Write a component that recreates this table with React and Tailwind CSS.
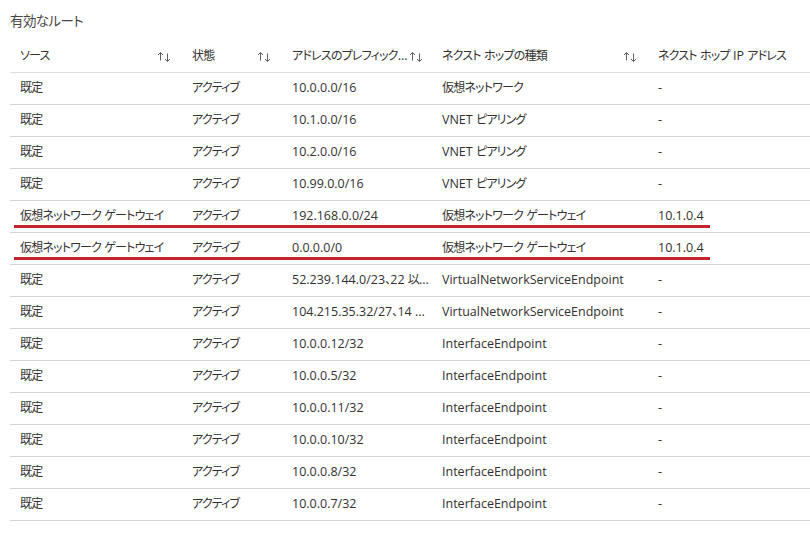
import React from 'react'

const rows = [
  ['既定', 'アクティブ', '10.0.0.0/16', '仮想ネットワーク', '-'],
  ['既定', 'アクティブ', '10.1.0.0/16', 'VNET ピアリング', '-'],
  ['既定', 'アクティブ', '10.2.0.0/16', 'VNET ピアリング', '-'],
  ['既定', 'アクティブ', '10.99.0.0/16', 'VNET ピアリング', '-'],
  ['仮想ネットワーク ゲートウェイ', 'アクティブ', '192.168.0.0/24', '仮想ネットワーク ゲートウェイ', '10.1.0.4', true],
  ['仮想ネットワーク ゲートウェイ', 'アクティブ', '0.0.0.0/0', '仮想ネットワーク ゲートウェイ', '10.1.0.4', true],
  ['既定', 'アクティブ', '52.239.144.0/23、22 以...', 'VirtualNetworkServiceEndpoint', '-'],
  ['既定', 'アクティブ', '104.215.35.32/27、14 ...', 'VirtualNetworkServiceEndpoint', '-'],
  ['既定', 'アクティブ', '10.0.0.12/32', 'InterfaceEndpoint', '-'],
  ['既定', 'アクティブ', '10.0.0.5/32', 'InterfaceEndpoint', '-'],
  ['既定', 'アクティブ', '10.0.0.11/32', 'InterfaceEndpoint', '-'],
  ['既定', 'アクティブ', '10.0.0.10/32', 'InterfaceEndpoint', '-'],
  ['既定', 'アクティブ', '10.0.0.8/32', 'InterfaceEndpoint', '-'],
  ['既定', 'アクティブ', '10.0.0.7/32', 'InterfaceEndpoint', '-'],
]

const cols = 'grid grid-cols-[172px_100px_150px_216px_1fr]'

// Japanese runs are set a little smaller and tighter than the latin text
const Mixed = ({ text }) => (
  <span className="whitespace-pre">
    {text.split(/([\u3000-\u30ff\u4e00-\u9fff]+)/).map((part, i) =>
      /[\u3000-\u30ff\u4e00-\u9fff]/.test(part) ? (
        <span key={i} className="text-[12px] tracking-[-0.8px]">{part}</span>
      ) : (
        <span key={i}>{part}</span>
      )
    )}
  </span>
)

const SortIcon = () => (
  <svg width="16" height="12" viewBox="0 0 16 12" className="shrink-0 text-[#605e5c]" fill="none" stroke="currentColor" strokeWidth="1">
    <path d="M4.5 1.5v8M2 4l2.5-2.5L7 4" />
    <path d="M11.5 2.5v8M9 8l2.5 2.5L14 8" />
  </svg>
)

const HeadCell = ({ label, sort, justify = 'justify-between' }) => (
  <div className={`flex items-center ${justify} pl-[10px] pr-[10px]`}>
    <Mixed text={label} />
    {sort && <SortIcon />}
  </div>
)

export default function App() {
  return (
    <div className="w-[810px] h-[554px] overflow-hidden bg-white text-[12.5px] text-[#323130] font-['Open_Sans','Noto_Sans_CJK_JP',sans-serif] [font-feature-settings:'palt']">
      <div className="pl-[10px] pt-[11px] leading-5 text-[#484644]">
        <span className="text-[13.5px] tracking-[-0.6px]">有効なルート</span>
      </div>
      <div className="ml-[10px] mt-[9px]">
        <div className={`${cols} h-8 border-b border-[#e1dfdd]`}>
          <HeadCell label="ソース" sort />
          <HeadCell label="状態" sort />
          <HeadCell label="アドレスのプレフィック..." sort justify="justify-start" />
          <HeadCell label="ネクスト ホップの種類" sort />
          <HeadCell label="ネクスト ホップ IP アドレス" />
        </div>
        {rows.map((r, i) => (
          <div key={i} className={`${cols} relative h-8 border-b border-[#d6d4d2]`}>
            {r.slice(0, 5).map((c, j) => (
              <div key={j} className="flex items-center pl-[10px] overflow-hidden">
                <Mixed text={c} />
              </div>
            ))}
            {r[5] && <div className="absolute left-[4px] bottom-[4px] w-[696px] h-[3px] bg-[#c7252d]" />}
          </div>
        ))}
      </div>
    </div>
  )
}
